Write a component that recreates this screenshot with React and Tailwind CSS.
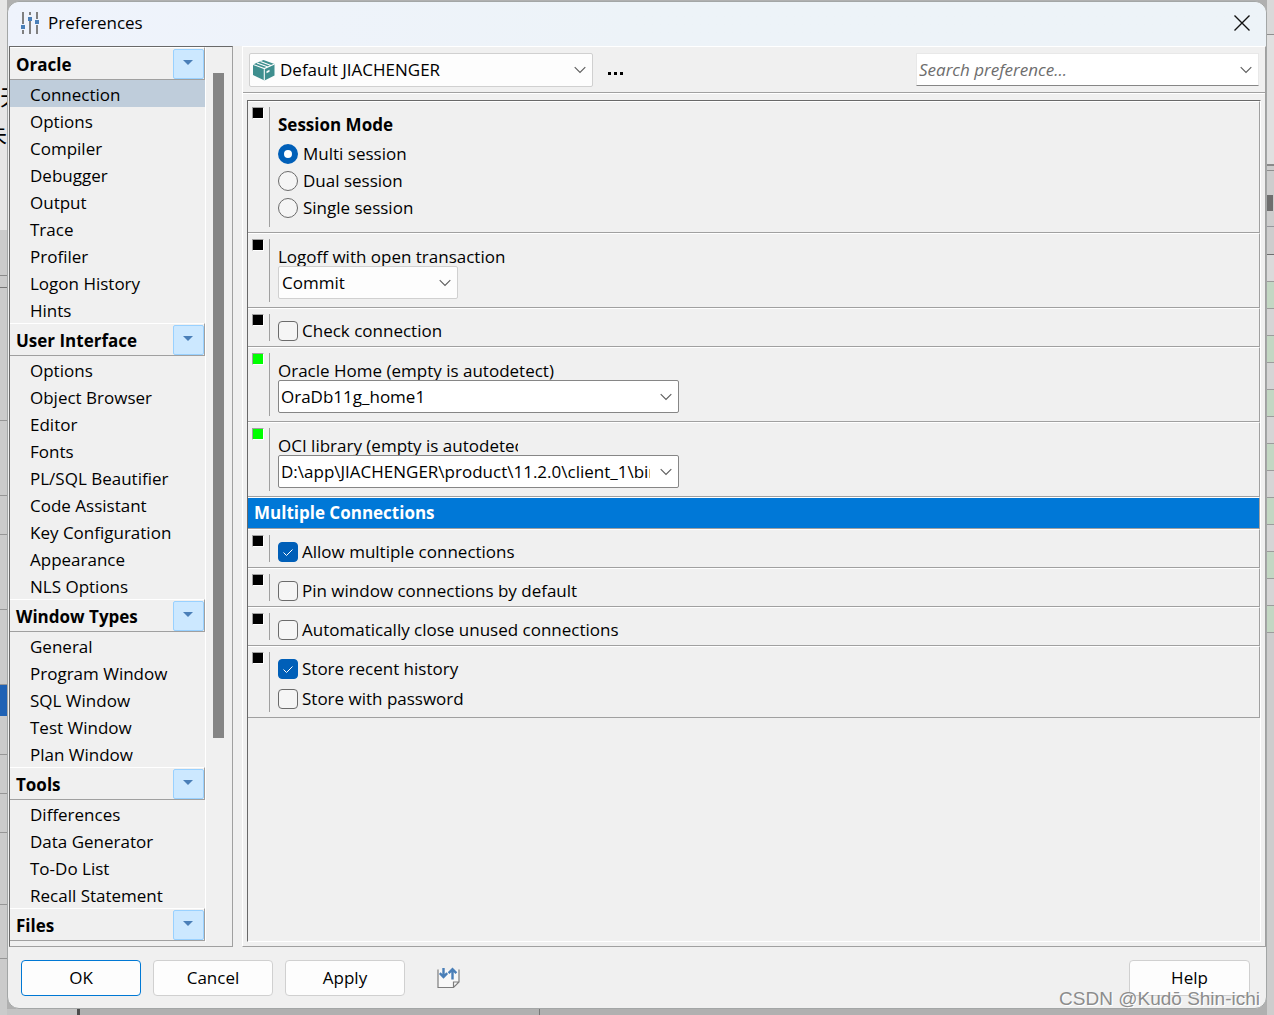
import React, { useState } from 'react';

const groups = [
  {
    title: 'Oracle',
    items: ['Connection', 'Options', 'Compiler', 'Debugger', 'Output', 'Trace', 'Profiler', 'Logon History', 'Hints'],
  },
  {
    title: 'User Interface',
    items: [
      'Options',
      'Object Browser',
      'Editor',
      'Fonts',
      'PL/SQL Beautifier',
      'Code Assistant',
      'Key Configuration',
      'Appearance',
      'NLS Options',
    ],
  },
  {
    title: 'Window Types',
    items: ['General', 'Program Window', 'SQL Window', 'Test Window', 'Plan Window'],
  },
  {
    title: 'Tools',
    items: ['Differences', 'Data Generator', 'To-Do List', 'Recall Statement'],
  },
  { title: 'Files', items: [] },
];

const Chevron = () => (
  <svg
    viewBox="0 0 12 8"
    className="pointer-events-none absolute top-1/2 right-[7px] h-2 w-3 -translate-y-1/2"
    fill="none"
    stroke="#5c5c5c"
    strokeWidth="1.1"
  >
    <path d="M0.7 1.2 L6 6.5 L11.3 1.2" />
  </svg>
);

const SlidersIcon = () => (
  <svg viewBox="0 0 20 24" className="h-6 w-5">
    <path d="M2 1h2v22h-2z M9 1h2v22h-2z M16 1h2v22h-2z" fill="#808080" />
    <path d="M1 13h4v6h-4z M8 4h4v6h-4z M15 8h4v6h-4z" fill="#eff3fb" />
    <path d="M1 14h4v4h-4z M8 6h4v4h-4z M15 9h4v4h-4z" fill="#4a7fb8" />
  </svg>
);

const BoxIcon = () => (
  <svg viewBox="0 0 22 22" className="pointer-events-none absolute top-1/2 left-1 h-[22px] w-[22px] -translate-y-1/2">
    <path d="M0 5.4 L10.5 1 L21.5 5 L21.5 16.5 L11.5 21.5 L0 16z" fill="#3f8f8f" />
    <path
      d="M0 5.4 L11.3 9.6 L21.5 5 M11.3 9.6 V21.5 M4 4 L15 8 M7.5 2.4 L18 6.4"
      fill="none"
      stroke="#fdfdfd"
      strokeWidth="1.1"
    />
    <path d="M13.5 12.2 L16.5 10.8 V12.8 L13.5 14.2z" fill="#fdfdfd" />
  </svg>
);

const ImportExportIcon = () => (
  <svg viewBox="0 0 23 22" className="h-[22px] w-[23px]">
    <path d="M1 3 V20.5 H16.5 L22 15 V3" fill="#f8f8f8" />
    <path d="M1 2.5 V20.5 H16.5 L22 15 V2.5 M16.5 20 V15 H22" fill="none" stroke="#7d7d7d" strokeWidth="1.2" />
    <path d="M6.5 1 V10 M2.8 6.2 L6.5 10 L10.2 6.2" fill="none" stroke="#4a7fb8" strokeWidth="2.4" />
    <path d="M15.5 12.5 V3 M11.6 6.2 L15.5 2.3 L19.4 6.2" fill="none" stroke="#4a7fb8" strokeWidth="2.4" />
  </svg>
);

const Section = ({ green, className = '', children }) => (
  <section
    className={`flex border-t border-r border-b border-t-white border-r-[#a0a0a0] border-b-[#a0a0a0] py-[5px] pl-1 ${className}`}
  >
    <span
      className={`h-3 w-3 shrink-0 border border-t-[#a0a0a0] border-r-white border-b-white border-l-[#a0a0a0] ${
        green ? 'bg-[#00ff00]' : 'bg-black'
      }`}
    />
    <div className="ml-[5px] grow border-l border-[#a0a0a0] pl-2">{children}</div>
  </section>
);

const Check = ({ label, defaultChecked }) => (
  <label className="flex w-fit items-center gap-1">
    <span className="grid h-5 w-5">
      <input
        type="checkbox"
        defaultChecked={defaultChecked}
        className="peer col-start-1 row-start-1 h-5 w-5 appearance-none rounded border border-[#6b6b6b] bg-[#f5f5f5] checked:border-[#005fb8] checked:bg-[#005fb8]"
      />
      <svg
        viewBox="0 0 20 20"
        className="pointer-events-none invisible col-start-1 row-start-1 h-5 w-5 peer-checked:visible"
        fill="none"
        stroke="#fff"
        strokeWidth="1"
      >
        <path d="M5.5 10.5 L8.5 13.5 L14.5 7.5" />
      </svg>
    </span>
    <span className="leading-[22px]">{label}</span>
  </label>
);

const Combo = ({ id, value, className, box }) => (
  <div className={`relative ${box}`}>
    <select
      id={id}
      className={`h-[33px] w-full appearance-none overflow-hidden rounded-xs border pr-7 ${className}`}
    >
      <option>{value}</option>
    </select>
    <Chevron />
  </div>
);

const Sidebar = ({ active, onSelect }) => {
  const [closed, setClosed] = useState({});

  return (
    <aside className="flex w-[224px] shrink-0 border-t border-r border-b border-l border-t-[#696969] border-r-[#a0a0a0] border-b-[#a0a0a0] border-l-[#696969]">
      <nav className="mb-1 w-[196px] border-r border-white">
        {groups.map((group) => (
          <div key={group.title}>
            <div className="flex h-[33px] items-center justify-between border-t border-r border-b border-t-white border-r-[#a0a0a0] border-b-[#a0a0a0] pl-1.5">
              <h2 className="pt-0.5 font-bold">{group.title}</h2>
              <button
                aria-label={`Toggle ${group.title}`}
                onClick={() => setClosed({ ...closed, [group.title]: !closed[group.title] })}
                className="flex h-[30px] w-[31px] items-center justify-center rounded-xs border border-[#99d1ff] bg-[#cce8ff] pr-0.5 pb-0.5"
              >
                <svg viewBox="0 0 10 5" className="h-[5px] w-2.5" fill="#4a7fb8">
                  <path d="M0 0h10l-5 5z" />
                </svg>
              </button>
            </div>
            {!closed[group.title] &&
              group.items.map((item) => {
                const key = `${group.title}/${item}`;
                return (
                  <a
                    key={key}
                    href="#"
                    onClick={() => onSelect(key)}
                    className={`block h-[27px] pl-5 leading-[29px] ${active === key ? 'bg-[#bfcddb]' : ''}`}
                  >
                    {item}
                  </a>
                );
              })}
          </div>
        ))}
      </nav>
      <div className="ml-[7px] pt-[26px]">
        <div className="h-[665px] w-[11px] bg-[#858585]" />
      </div>
    </aside>
  );
};

const LeftBackdrop = () => (
  <div className="flex w-[7px] shrink-0 flex-col overflow-hidden bg-[#cbcbcb] font-[Noto_Sans_CJK_SC,sans-serif] text-[22px]">
    <div className="flex h-[230px] flex-col bg-[#e6e6e6] pt-[76px] leading-[38px]">
      <span className="self-start">天</span>
      <span className="self-end">未</span>
    </div>
    <div className="h-[46px] border-b border-[#8a8a8a]" />
    <div className="h-3 border-b border-[#777]" />
    <div className="h-[133px] border-b border-[#969696]" />
    <div className="h-[75px] border-b border-[#969696]" />
    <div className="h-[39px] border-b border-[#969696]" />
    <div className="h-[75px] border-b border-[#969696]" />
    <div className="h-[75px] border-b border-[#969696]" />
    <div className="h-[31px] bg-[#1f62b5]" />
    <div className="h-[39px] border-b border-[#969696]" />
    <div className="h-[39px] border-b border-[#969696]" />
    <div className="h-[39px] border-b border-[#969696]" />
    <div className="h-[72px] border-b border-[#969696]" />
    <div className="h-[54px] border-b border-[#969696]" />
  </div>
);

const RightBackdrop = () => (
  <div className="flex w-[7px] shrink-0 flex-col bg-[#cdcdcd]">
    <div className="h-[35px] border-b border-[#8f8f8f] bg-[#d9d9d9]" />
    <div className="h-[131px] border-b-2 border-[#8a8a8a] bg-[#e0e0e0]" />
    <div className="h-[5px] border-b border-[#8f8f8f]" />
    <div className="h-[56px] border-b border-[#96969c] pt-6">
      <div className="h-4 w-1.5 bg-[#6e6e6e]" />
    </div>
    <div className="h-7 border-b border-[#6e6e6e]" />
    <div className="h-[27px] border-b border-[#9c9c9c] bg-[#dadada]" />
    {[0, 1, 2, 3, 4, 5, 6].map((n) => (
      <div key={n}>
        <div className="h-[27px] border-b border-[#9c9c9c] bg-[#c3d7c3]" />
        {n < 6 && <div className="h-[27px] border-b border-[#9c9c9c] bg-[#d5d5d5]" />}
      </div>
    ))}
  </div>
);

const App = () => {
  const [active, setActive] = useState('Oracle/Connection');
  const [mode, setMode] = useState('Multi session');

  return (
    <div className="relative flex min-h-screen bg-[#cbcbcb] font-[Open_Sans,Noto_Sans,sans-serif] text-[17px] text-black">
      <LeftBackdrop />
      <div className="flex min-w-0 grow flex-col bg-[#b0b0b0] pt-px">
        <main className="flex grow flex-col rounded-xl border border-[#a3a6a6] bg-[#f0f0f0]">
          <header className="flex h-11 shrink-0 items-center rounded-t-xl bg-linear-to-r from-[#eff3fc] via-[#edf3f8] to-[#edf3f8] pr-3.5 pb-[3px] pl-3">
            <SlidersIcon />
            <h1 className="ml-2 grow">Preferences</h1>
            <button aria-label="Close" className="flex h-5 w-5 items-center justify-center">
              <svg viewBox="0 0 16 16" className="h-4 w-4" stroke="#111" strokeWidth="1.4">
                <path d="M0.5 0.5 L15.5 15.5 M15.5 0.5 L0.5 15.5" />
              </svg>
            </button>
          </header>

          <div className="flex grow gap-[9px] pl-px">
            <Sidebar active={active} onSelect={setActive} />

            <div className="flex min-w-0 grow flex-col border border-t-white border-r-[#a0a0a0] border-b-[#a0a0a0] border-l-white">
              <div className="flex h-[46px] items-center border-b border-[#a0a0a0] pr-1.5 pl-1.5">
                <div className="relative w-[344px]">
                  <select
                    aria-label="Preference set"
                    className="h-[34px] w-full appearance-none rounded-xs border border-[#d0d0d0] bg-[#fdfdfd] pr-7 pl-[30px]"
                  >
                    <option>Default JIACHENGER</option>
                  </select>
                  <BoxIcon />
                  <Chevron />
                </div>
                <button aria-label="More" className="ml-[15px] flex h-5 items-end gap-[3px] pb-[5px]">
                  <span className="h-[3px] w-[3px] bg-black" />
                  <span className="h-[3px] w-[3px] bg-black" />
                  <span className="h-[3px] w-[3px] bg-black" />
                </button>
                <div className="relative ml-auto w-[343px]">
                  <input
                    type="text"
                    aria-label="Search preference"
                    placeholder="Search preference..."
                    className="h-[33px] w-full border border-[#e8e8e8] border-b-[#868686] bg-white pr-7 pl-0.5 italic placeholder:text-[#6d6d6d]"
                  />
                  <Chevron />
                </div>
              </div>

              <div className="flex grow flex-col border-t border-white pt-1.5 pr-1 pb-1 pl-1">
                <div className="grow border border-t-[#696969] border-r-white border-b-white border-l-[#696969]">
                  <Section className="h-[132px]">
                    <fieldset>
                      <legend className="pt-1 pb-0.5 leading-[27px] font-bold">Session Mode</legend>
                      {['Multi session', 'Dual session', 'Single session'].map((name) => (
                        <label key={name} className="flex h-[27px] w-fit items-center gap-[5px]">
                          <input
                            type="radio"
                            name="mode"
                            checked={mode === name}
                            onChange={() => setMode(name)}
                            className="h-5 w-5 appearance-none rounded-full border border-[#6b6b6b] bg-[#f5f5f5] checked:border-6 checked:border-[#005fb8] checked:bg-white"
                          />
                          {name}
                        </label>
                      ))}
                    </fieldset>
                  </Section>

                  <Section className="h-[75px]">
                    <label htmlFor="logoff" className="block h-[27px] pt-1 leading-[27px]">
                      Logoff with open transaction
                    </label>
                    <Combo id="logoff" value="Commit" box="w-[180px]" className="border-[#d0d0d0] bg-[#fdfdfd] pl-[3px]" />
                  </Section>

                  <Section className="h-[39px]">
                    <div className="pt-1.5">
                      <Check label="Check connection" />
                    </div>
                  </Section>

                  <Section green className="h-[75px]">
                    <label htmlFor="home" className="block h-[27px] pt-1 leading-[27px]">
                      Oracle Home (empty is autodetect)
                    </label>
                    <Combo id="home" value="OraDb11g_home1" box="w-[401px]" className="border-[#868686] bg-white pl-0.5" />
                  </Section>

                  <Section green className="h-[75px]">
                    <label
                      htmlFor="oci"
                      className="block h-[27px] w-[240px] overflow-hidden pt-1 leading-[27px] whitespace-nowrap"
                    >
                      OCI library (empty is autodetect)
                    </label>
                    <Combo
                      id="oci"
                      value="D:\app\JIACHENGER\product\11.2.0\client_1\bin\oci.dll"
                      box="w-[401px]"
                      className="border-[#868686] bg-white pl-0.5"
                    />
                  </Section>

                  <h2 className="h-8 border-t border-r border-b border-t-white border-r-[#a0a0a0] border-b-[#a0a0a0] bg-[#0078d7] pl-1.5 leading-[30px] font-bold text-white">
                    Multiple Connections
                  </h2>

                  <Section className="h-[39px]">
                    <div className="pt-1.5">
                      <Check label="Allow multiple connections" defaultChecked />
                    </div>
                  </Section>
                  <Section className="h-[39px]">
                    <div className="pt-1.5">
                      <Check label="Pin window connections by default" />
                    </div>
                  </Section>
                  <Section className="h-[39px]">
                    <div className="pt-1.5">
                      <Check label="Automatically close unused connections" />
                    </div>
                  </Section>
                  <Section className="h-[72px]">
                    <div className="flex flex-col gap-2 pt-1.5">
                      <Check label="Store recent history" defaultChecked />
                      <Check label="Store with password" />
                    </div>
                  </Section>
                </div>
              </div>
            </div>
          </div>

          <footer className="flex h-[61px] shrink-0 items-center gap-3 pr-4 pl-[13px]">
            <button className="h-9 w-[120px] rounded border border-[#0078d4] bg-[#fdfdfd]">OK</button>
            <button className="h-9 w-[120px] rounded border border-[#d0d0d0] bg-[#fdfdfd]">Cancel</button>
            <button className="h-9 w-[120px] rounded border border-[#d0d0d0] bg-[#fdfdfd]">Apply</button>
            <button aria-label="Import or export" className="ml-5">
              <ImportExportIcon />
            </button>
            <button className="ml-auto h-9 w-[121px] rounded border border-[#d0d0d0] bg-[#fdfdfd]">Help</button>
          </footer>
        </main>
        <div className="flex h-1.5 shrink-0">
          <div className="w-[70px] bg-[#c4c4c4]" />
          <div className="w-[3px] bg-[#4c4c4c]" />
          <div className="w-[460px] border-r border-[#777]" />
        </div>
      </div>
      <RightBackdrop />
      <p className="pointer-events-none absolute right-3.5 bottom-1 font-[Liberation_Sans,sans-serif] text-[19px] leading-6 text-[#8c8c8c] [text-shadow:1px_1px_0_#fff]">
        CSDN @Kudō Shin-ichi
      </p>
    </div>
  );
};

export default App;
